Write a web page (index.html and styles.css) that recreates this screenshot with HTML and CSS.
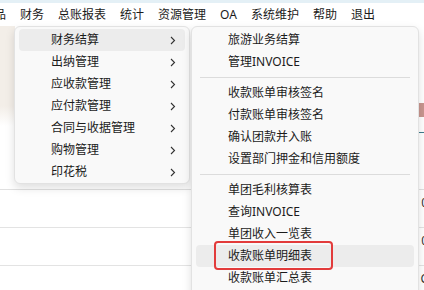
FILE: index.html
```html
<!DOCTYPE html>
<html lang="zh-CN">
<head>
    <meta charset="UTF-8">
    <meta name="viewport" content="width=device-width, initial-scale=1.0">
    <title>财务结算</title>
    <link rel="stylesheet" href="styles.css">
</head>
<body>

    <div class="topline"></div>
    <nav class="menubar">
        <span class="menu-item first">产品</span>
        <span class="menu-item">财务</span>
        <span class="menu-item">总账报表</span>
        <span class="menu-item">统计</span>
        <span class="menu-item">资源管理</span>
        <span class="menu-item">OA</span>
        <span class="menu-item">系统维护</span>
        <span class="menu-item">帮助</span>
        <span class="menu-item">退出</span>
    </nav>

    <main class="page">
        <div class="banner"></div>
        <div class="row"><span class="num">0</span></div>
        <div class="row"><span class="num">0</span></div>
        <div class="row"><span class="num">C</span></div>
    </main>

    <!-- 财务 下拉菜单 -->
    <div class="dropdown">
        <div class="dd-item active"><span>财务结算</span><svg class="arrow" width="6" height="9" viewBox="0 0 6 9"><path d="M1 1 L4.5 4.5 L1 8" /></svg></div>
        <div class="dd-item"><span>出纳管理</span><svg class="arrow" width="6" height="9" viewBox="0 0 6 9"><path d="M1 1 L4.5 4.5 L1 8" /></svg></div>
        <div class="dd-item"><span>应收款管理</span><svg class="arrow" width="6" height="9" viewBox="0 0 6 9"><path d="M1 1 L4.5 4.5 L1 8" /></svg></div>
        <div class="dd-item"><span>应付款管理</span><svg class="arrow" width="6" height="9" viewBox="0 0 6 9"><path d="M1 1 L4.5 4.5 L1 8" /></svg></div>
        <div class="dd-item"><span>合同与收据管理</span><svg class="arrow" width="6" height="9" viewBox="0 0 6 9"><path d="M1 1 L4.5 4.5 L1 8" /></svg></div>
        <div class="dd-item"><span>购物管理</span><svg class="arrow" width="6" height="9" viewBox="0 0 6 9"><path d="M1 1 L4.5 4.5 L1 8" /></svg></div>
        <div class="dd-item"><span>印花税</span><svg class="arrow" width="6" height="9" viewBox="0 0 6 9"><path d="M1 1 L4.5 4.5 L1 8" /></svg></div>
    </div>

    <!-- 财务结算 子菜单 -->
    <div class="submenu">
        <div class="dd-item">旅游业务结算</div>
        <div class="dd-item">管理INVOICE</div>
        <div class="sep"></div>
        <div class="dd-item">收款账单审核签名</div>
        <div class="dd-item">付款账单审核签名</div>
        <div class="dd-item">确认团款并入账</div>
        <div class="dd-item">设置部门押金和信用额度</div>
        <div class="sep"></div>
        <div class="dd-item">单团毛利核算表</div>
        <div class="dd-item">查询INVOICE</div>
        <div class="dd-item">单团收入一览表</div>
        <div class="dd-item active marked">收款账单明细表<span class="mark"></span></div>
        <div class="dd-item">收款账单汇总表</div>
    </div>

</body>
</html>
```

FILE: styles.css
```css
html, body {
    margin: 0;
    padding: 0;
}
body {
    width: 424px;
    height: 290px;
    overflow: hidden;
    position: relative;
    font-family: "Noto Sans", "Noto Sans CJK SC", sans-serif;
    font-size: 12px;
    color: #1b1b1b;
    background-color: #fff;
}
.topline {
    height: 3px;
    background-color: #e4f0f6;
}
.menubar {
    display: flex;
    height: 23px;
    line-height: 23px;
    background-color: #fff;
    white-space: nowrap;
}
.menu-item {
    padding: 0 7px;
}
.menu-item.first {
    margin-left: -25px;
}
.banner {
    height: 163px;
    border-bottom: 1px solid #e0e0e0;
    background:
        linear-gradient(#c8968f, #c8968f) right 0 top 77px / 5px 14px no-repeat,
        linear-gradient(#3f7c8c, #3f7c8c) right 0 top 106px / 5px 1px no-repeat,
        linear-gradient(to bottom, #f3eee8 0, #f3eee8 80px, #fff 100px) left top / 15px 100% no-repeat;
}
.row {
    display: flex;
    justify-content: flex-end;
    height: 37px;
    border-bottom: 1px solid #e3e3e3;
    overflow: hidden;
}
.num {
    margin-right: -4px;
    padding-top: 4px;
    color: #333;
}
.dropdown, .submenu {
    position: absolute;
    top: 26px;
    box-sizing: border-box;
    padding: 2px 4px;
    background-color: #f9f9f9;
    border: 1px solid #e2e2e2;
    border-radius: 6px;
    box-shadow: 0 4px 10px rgba(0, 0, 0, 0.13);
}
.dropdown {
    left: 14px;
    width: 176px;
    height: 158px;
}
.submenu {
    left: 191px;
    width: 228px;
    height: 280px;
}
.dd-item {
    display: flex;
    align-items: center;
    justify-content: space-between;
    height: 22px;
    line-height: 22px;
    padding: 0 9px 0 32px;
    border-radius: 4px;
    white-space: nowrap;
}
.dd-item.active {
    background-color: #ececec;
}
.arrow path {
    fill: none;
    stroke: #333;
    stroke-width: 1.1;
}
.sep {
    height: 1px;
    margin: 4px 4px;
    background-color: #dcdcdc;
}
.marked {
    position: relative;
}
.mark {
    position: absolute;
    left: 18px;
    top: -4px;
    width: 119px;
    height: 29px;
    box-sizing: border-box;
    border: 2.5px solid #e23b3b;
    border-radius: 4px;
}
```
